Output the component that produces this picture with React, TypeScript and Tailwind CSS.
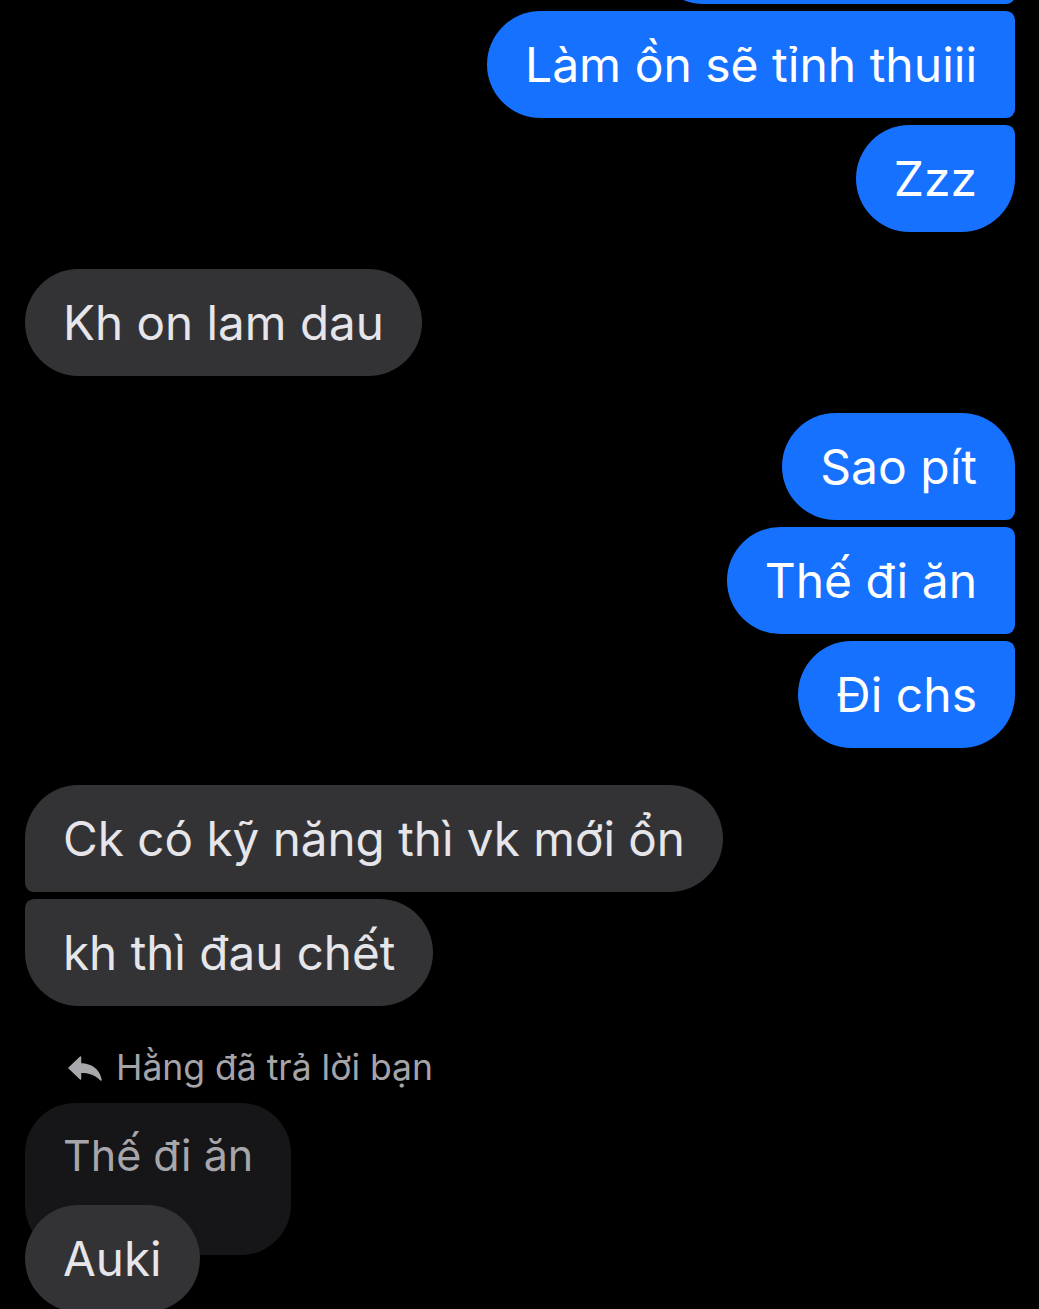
import React from "react";

const BLUE = "bg-[#1671fe]";

type Corners = string;

function Sent({ text, corners, className = "" }: { text: string; corners: Corners; className?: string }) {
  return (
    <div className={`self-end ${BLUE} text-white px-[38px] py-[24px] leading-[59px] text-[48px] whitespace-nowrap ${corners} ${className}`}>
      {text}
    </div>
  );
}

function Recv({ text, corners, className = "" }: { text: string; corners: Corners; className?: string }) {
  return (
    <div className={`self-start bg-[#333336] text-[#e6e6ea] px-[38px] py-[24px] leading-[59px] text-[47.6px] whitespace-nowrap ${corners} ${className}`}>
      {text}
    </div>
  );
}

export default function App() {
  return (
    <div
      className="w-[1039px] h-[1309px] bg-black overflow-hidden"
      style={{ fontFamily: "Inter, 'Noto Sans', sans-serif" }}
    >
      <div className="flex flex-col pl-[25px] pr-[24px]">
        {/* partial bubble above */}
        <div className={`self-end ${BLUE} w-[365px] h-[107px] mt-[-103px] rounded-l-[54px] rounded-tr-[54px] rounded-br-[9px]`} />
        <Sent
          text="Làm ồn sẽ tỉnh thuiii"
          corners="rounded-l-[54px] rounded-r-[9px]"
          className="mt-[7px]"
        />
        <Sent
          text="Zzz"
          corners="rounded-l-[54px] rounded-tr-[9px] rounded-br-[54px]"
          className="mt-[7px]"
        />
        <Recv text="Kh on lam dau" corners="rounded-[54px]" className="mt-[37px]" />
        <Sent
          text="Sao pít"
          corners="rounded-l-[54px] rounded-tr-[54px] rounded-br-[9px]"
          className="mt-[37px]"
        />
        <Sent text="Thế đi ăn" corners="rounded-l-[54px] rounded-r-[9px]" className="mt-[7px]" />
        <Sent
          text="Đi chs"
          corners="rounded-l-[54px] rounded-tr-[9px] rounded-br-[54px]"
          className="mt-[7px]"
        />
        <Recv
          text="Ck có kỹ năng thì vk mới ổn"
          corners="rounded-r-[54px] rounded-tl-[54px] rounded-bl-[9px]"
          className="mt-[37px]"
        />
        <Recv
          text="kh thì đau chết"
          corners="rounded-r-[54px] rounded-tl-[9px] rounded-bl-[54px]"
          className="mt-[7px]"
        />
        {/* reply label */}
        <div className="mt-[44px] ml-[43px] flex items-center gap-[14px] text-[#a4a4a9] text-[35.5px] leading-[36px] whitespace-nowrap">
          <svg width="34" height="25" viewBox="0 0 34 25" fill="#a8a8ad" stroke="#a8a8ad" strokeWidth="1.5" strokeLinejoin="round">
            <path d="M12.5 1 L1 12 L12.5 23 L12.5 16 C20.5 16 27.5 18 33 24 C31 14 25 8.5 12.5 7.8 Z" />
          </svg>
          <span>Hằng đã trả lời bạn</span>
        </div>
        <div className="mt-[17px] self-start flex flex-col">
          <div className="self-start bg-[#161618] text-[#a6a6ab] px-[38px] pt-[24px] pb-[72px] leading-[56px] text-[43px] whitespace-nowrap rounded-[50px]">
            Thế đi ăn
          </div>
          <Recv text="Auki" corners="rounded-[54px]" className="mt-[-50px] relative" />
        </div>
      </div>
    </div>
  );
}
